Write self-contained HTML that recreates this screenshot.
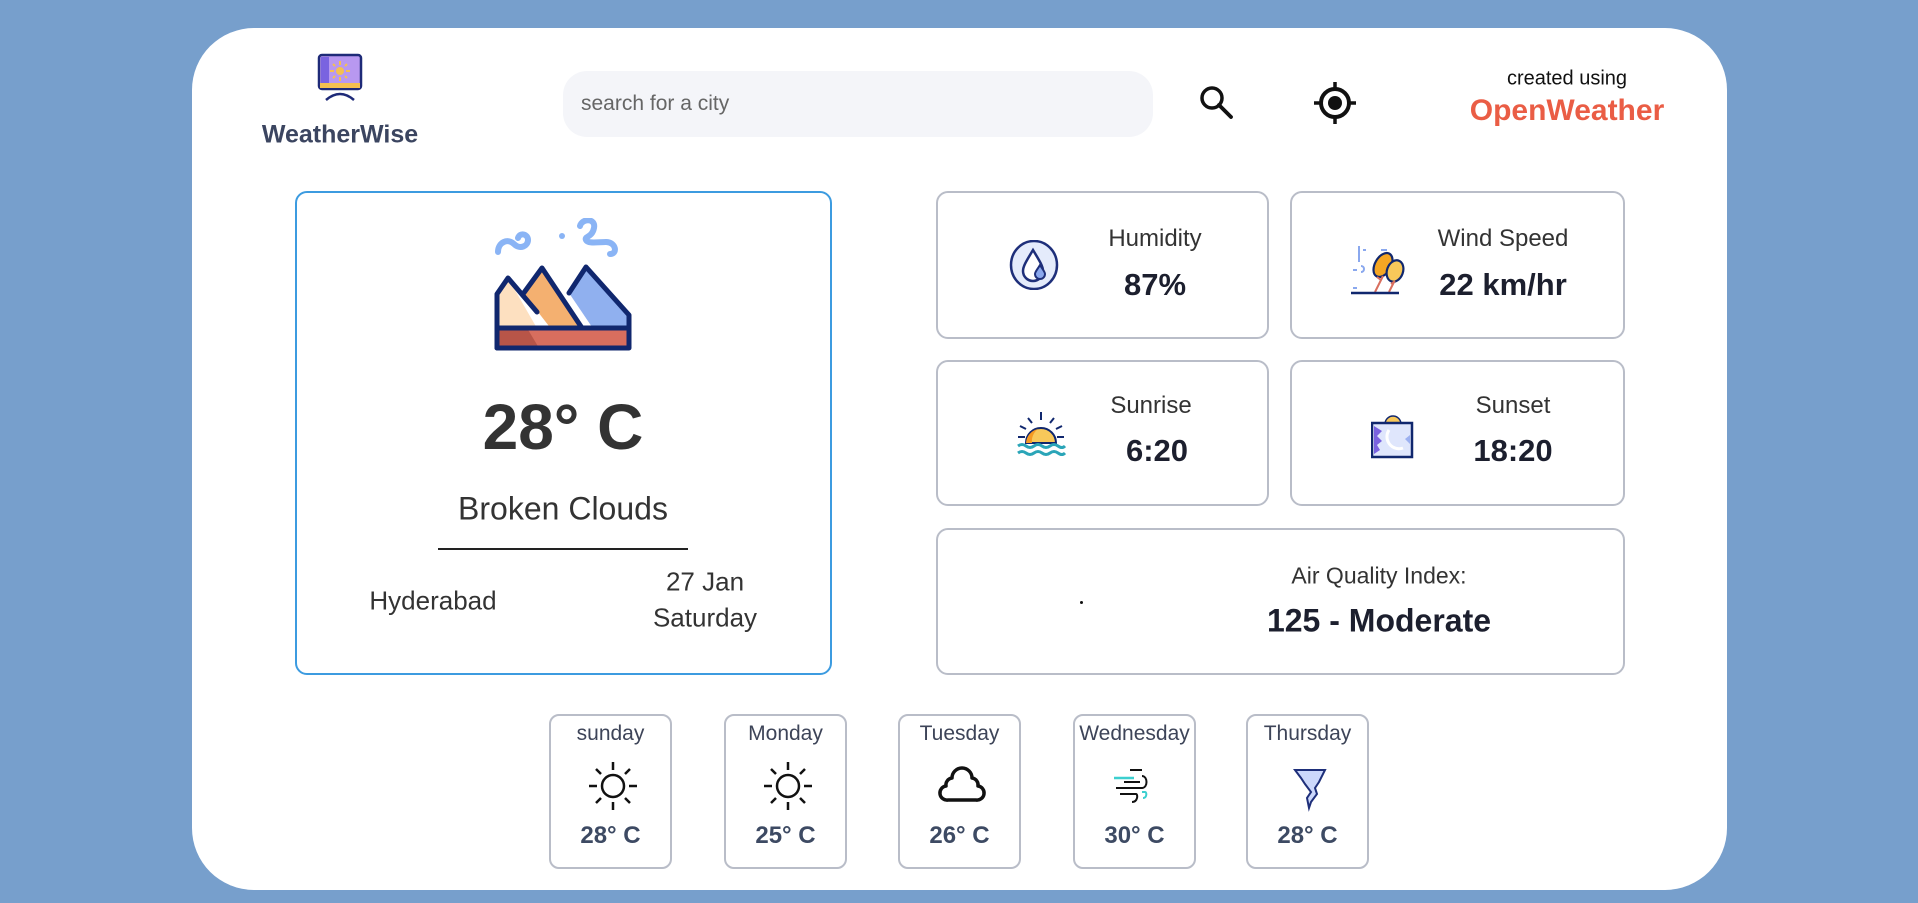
<!DOCTYPE html>
<html><head><meta charset="utf-8"><style>
*{margin:0;padding:0;box-sizing:border-box}
body{width:1918px;height:903px;background:#779fcc;font-family:"Liberation Sans",sans-serif;position:relative;overflow:hidden;color:#333}
.card{position:absolute;left:192px;top:28px;width:1535px;height:862px;background:#fff;border-radius:62px}
.abs{position:absolute}
.c{position:absolute;transform:translate(-50%,-50%);white-space:nowrap;text-align:center}
.box{position:absolute;border:2.5px solid #b9bdc8;border-radius:12px;background:#fff}
.lab{font-size:24px;color:#333}
.val{font-size:31px;font-weight:bold;color:#1c1f2e}
.fc{position:absolute;top:714px;width:123px;height:155px;border:2.5px solid #b9bdc8;border-radius:10px}
.fc .d{position:absolute;top:6px;left:-4px;right:-4px;text-align:center;font-size:21px;color:#3d4458}
.fc .t{position:absolute;top:106px;left:0;right:0;text-align:center;font-size:24px;font-weight:bold;color:#3d4a63}
.fc svg{position:absolute;left:37px;top:40px}
</style></head><body>
<div class="card"></div>

<!-- logo -->
<svg class="abs" style="left:316px;top:53px" width="48" height="48" viewBox="0 0 48 48">
<rect x="3" y="2" width="42" height="34" rx="3" fill="#b898f0" stroke="#1e2a78" stroke-width="2.5"/>
<rect x="5" y="4" width="8" height="30" fill="#7a63e0"/>
<rect x="4" y="30" width="40" height="5" fill="#f4c050"/>
<circle cx="24" cy="18" r="4" fill="#f4c050"/>
<g stroke="#f4c050" stroke-width="2"><path d="M24 8v4M24 24v4M14 18h4M30 18h4M17 11l2 2M29 23l2 2M31 11l-2 2M19 23l-2 2"/></g>
<path d="M10 47q14-12 28 0" fill="none" stroke="#1e2a78" stroke-width="2.5"/>
</svg>
<div class="c" style="left:340px;top:135px;font-size:25px;font-weight:bold;color:#3b4560">WeatherWise</div>

<!-- search -->
<div class="abs" style="left:563px;top:71px;width:590px;height:66px;background:#f4f5f9;border-radius:24px"></div>
<div class="abs" style="left:581px;top:92px;font-size:21px;color:#666">search for a city</div>
<svg class="abs" style="left:1198px;top:84px" width="38" height="38" viewBox="0 0 38 38"><circle cx="14" cy="14" r="10" fill="none" stroke="#111" stroke-width="3.5"/><path d="M21 21l12 12" stroke="#111" stroke-width="3.8" stroke-linecap="round"/></svg>
<svg class="abs" style="left:1312px;top:80px" width="46" height="46" viewBox="0 0 46 46"><circle cx="23" cy="23" r="14" fill="none" stroke="#111" stroke-width="4"/><circle cx="23" cy="23" r="7" fill="#111"/><path d="M23 2v8M23 36v8M2 23h8M36 23h8" stroke="#111" stroke-width="3.5"/></svg>
<div class="c" style="left:1567px;top:79px;font-size:20px;color:#111">created using</div>
<div class="c" style="left:1567px;top:111px;font-size:30px;font-weight:bold;color:#ea5d45">OpenWeather</div>

<!-- main card -->
<div class="abs" style="left:295px;top:191px;width:537px;height:484px;border:2.5px solid #3c9be0;border-radius:12px"></div>
<svg class="abs" style="left:494px;top:218px" width="140" height="134" viewBox="0 0 140 134">
<g fill="none" stroke="#8ab4f5" stroke-width="6" stroke-linecap="round">
<path d="M4 34c0-10 10-14 16-8s14 2 14-4-8-8-10-2"/>
<path d="M86 8c2-8 16-8 14 2s-10 8-8 12 12 2 20 2c10 0 12 12 4 12"/>
</g>
<circle cx="68" cy="18" r="3" fill="#8ab4f5"/>
<path d="M3 112V76l11-16 30 52z" fill="#fde0c0"/>
<path d="M30 76l18-26 40 62H58z" fill="#f4b070"/>
<path d="M75 75l17-26 43 48v15H100z" fill="#90b0ef"/>
<path d="M92 49l10 12 12-3z" fill="#fff"/>
<path d="M3 110h132v20H3z" fill="#d86e5e"/>
<path d="M3 110h30l12 20H3z" fill="#b85548"/>
<g fill="none" stroke="#10276e" stroke-width="5" stroke-linejoin="round" stroke-linecap="round">
<path d="M3 130V76l11-16 29 34"/>
<path d="M29 76l19-26 40 60"/>
<path d="M75 75l17-26 43 48v33H3M3 110h132"/>
</g>
</svg>
<div class="c" style="left:563px;top:427px;font-size:64px;font-weight:bold;color:#333">28° C</div>
<div class="c" style="left:563px;top:509px;font-size:32px;color:#333">Broken Clouds</div>
<div class="abs" style="left:438px;top:548px;width:250px;height:2px;background:#222"></div>
<div class="c" style="left:433px;top:601px;font-size:26px">Hyderabad</div>
<div class="c" style="left:705px;top:582px;font-size:26px">27 Jan</div>
<div class="c" style="left:705px;top:618px;font-size:26px">Saturday</div>

<!-- small cards -->
<div class="box" style="left:936px;top:191px;width:333px;height:148px"></div>
<div class="box" style="left:1290px;top:191px;width:335px;height:148px"></div>
<div class="box" style="left:936px;top:360px;width:333px;height:146px"></div>
<div class="box" style="left:1290px;top:360px;width:335px;height:146px"></div>
<div class="box" style="left:936px;top:528px;width:689px;height:147px"></div>

<svg class="abs" style="left:1009px;top:240px" width="50" height="50" viewBox="0 0 50 50"><ellipse cx="25" cy="25" rx="23" ry="24" fill="#e4ebfb" stroke="#1e2f7a" stroke-width="2.5"/><path d="M24 10c-6 10-10 16-10 21a10 10 0 0 0 20 0c0-5-4-11-10-21z" fill="#fff" stroke="#1e2f7a" stroke-width="2.5"/><path d="M31 25c-3 5-5 7-5 9a5 5 0 0 0 10 0c0-2-2-4-5-9z" fill="#8aa8ee" stroke="#1e2f7a" stroke-width="2"/></svg>
<div class="c lab" style="left:1155px;top:239px">Humidity</div>
<div class="c val" style="left:1155px;top:285px">87%</div>

<svg class="abs" style="left:1351px;top:238px" width="62" height="58" viewBox="0 0 62 58"><g stroke="#8aa8ee" stroke-width="2"><path d="M2 32h4M2 50h4M8 8v16M12 12h3M30 12h6M32 20h4"/><path d="M10 28c4 0 4 6 0 6" fill="none"/></g><ellipse cx="32" cy="27" rx="8" ry="13" transform="rotate(30 32 27)" fill="#f5a623" stroke="#10276e" stroke-width="2.2"/><ellipse cx="44" cy="33" rx="8" ry="11" transform="rotate(20 44 33)" fill="#f8c85a" stroke="#10276e" stroke-width="2.2"/><path d="M24 54l8-16M38 54l5-10M30 42l-4-3M40 46l4-3" stroke="#d86e5e" stroke-width="2"/><path d="M0 55h48" stroke="#10276e" stroke-width="2.5"/></svg>
<div class="c lab" style="left:1503px;top:239px">Wind Speed</div>
<div class="c val" style="left:1503px;top:285px">22 km/hr</div>

<svg class="abs" style="left:1016px;top:410px" width="50" height="48" viewBox="0 0 50 48"><g stroke="#10276e" stroke-width="2"><path d="M25 2v8M12 8l4 5M38 8l-4 5M4 16l6 3M46 16l-6 3M2 27h7M41 27h7"/></g><path d="M10 33a15 15 0 0 1 30 0z" fill="#f8c85a" stroke="#10276e" stroke-width="2"/><path d="M10 33a15 15 0 0 1 12-14a15 15 0 0 0-6 14z" fill="#f59a23"/><path d="M2 36q4-3 8 0t8 0t8 0t8 0t8 0t7 0M2 43q4-3 8 0t8 0t8 0t8 0t8 0t7 0" fill="none" stroke="#2aa5b8" stroke-width="3"/></svg>
<div class="c lab" style="left:1151px;top:406px">Sunrise</div>
<div class="c val" style="left:1157px;top:451px">6:20</div>

<svg class="abs" style="left:1371px;top:414px" width="44" height="46" viewBox="0 0 44 46"><circle cx="22" cy="10" r="8" fill="#f8c85a" stroke="#10276e" stroke-width="1.5"/><rect x="1" y="9" width="40" height="34" fill="#dfe6fc" stroke="#10276e" stroke-width="2.5"/><path d="M3 12v28l6-4-3-5 5-4-5-5 5-5z" fill="#7a63e0"/><path d="M39 12v9l-5 4 5 5z" fill="#9cb0f0"/><path d="M18 16a12 12 0 0 0 14 18" fill="none" stroke="#fff" stroke-width="3"/></svg>
<div class="c lab" style="left:1513px;top:406px">Sunset</div>
<div class="c val" style="left:1513px;top:451px">18:20</div>

<div class="abs" style="left:1080px;top:601px;width:3px;height:3px;background:#111;border-radius:50%"></div>
<div class="c lab" style="left:1379px;top:576px;font-size:23px">Air Quality Index:</div>
<div class="c val" style="left:1379px;top:621px;font-size:32px">125 - Moderate</div>

<!-- forecast -->
<div class="fc" style="left:549px"><div class="d">sunday</div>
<svg width="50" height="60" viewBox="0 0 50 60"><circle cx="25" cy="30" r="11" fill="none" stroke="#111" stroke-width="2.5"/><g stroke="#111" stroke-width="2.5"><path d="M25 6v8M25 46v8M1 30h8M41 30h8M8 13l5 5M42 13l-5 5M8 47l5-5M42 47l-5-5"/></g></svg>
<div class="t">28° C</div></div>
<div class="fc" style="left:724px"><div class="d">Monday</div>
<svg width="50" height="60" viewBox="0 0 50 60"><circle cx="25" cy="30" r="11" fill="none" stroke="#111" stroke-width="2.5"/><g stroke="#111" stroke-width="2.5"><path d="M25 6v8M25 46v8M1 30h8M41 30h8M8 13l5 5M42 13l-5 5M8 47l5-5M42 47l-5-5"/></g></svg>
<div class="t">25° C</div></div>
<div class="fc" style="left:898px"><div class="d">Tuesday</div>
<svg width="50" height="60" viewBox="0 0 50 60"><path d="M11 44h28a7 7 0 0 0 2-14 7 7 0 0 0-6-8 10 10 0 0 0-20 0 7 7 0 0 0-6 8 7 7 0 0 0 2 14z" fill="none" stroke="#111" stroke-width="3.5" stroke-linejoin="round"/></svg>
<div class="t">26° C</div></div>
<div class="fc" style="left:1073px"><div class="d">Wednesday</div>
<svg width="50" height="60" viewBox="0 0 50 60"><path d="M18 14h12" stroke="#111" stroke-width="2"/><path d="M2 22h20" stroke="#3ccfcf" stroke-width="2.5"/><path d="M30 20c6 0 6 12 0 12H4M8 38h16c2 0 2 8-4 8" fill="none" stroke="#111" stroke-width="2"/><path d="M12 26h16" stroke="#111" stroke-width="2"/><path d="M30 36h3c2 0 2 6-2 6" fill="none" stroke="#3ccfcf" stroke-width="2"/></svg>
<div class="t">30° C</div></div>
<div class="fc" style="left:1246px"><div class="d">Thursday</div>
<svg width="50" height="60" viewBox="0 0 50 60"><path d="M10 14h30l-6 12-4 6 2 6-6 8-2 6-2-10 4-6-6-8-4-6z" fill="#ccd8fb" stroke="#1e2f7a" stroke-width="2"/></svg>
<div class="t">28° C</div></div>
</body></html>
